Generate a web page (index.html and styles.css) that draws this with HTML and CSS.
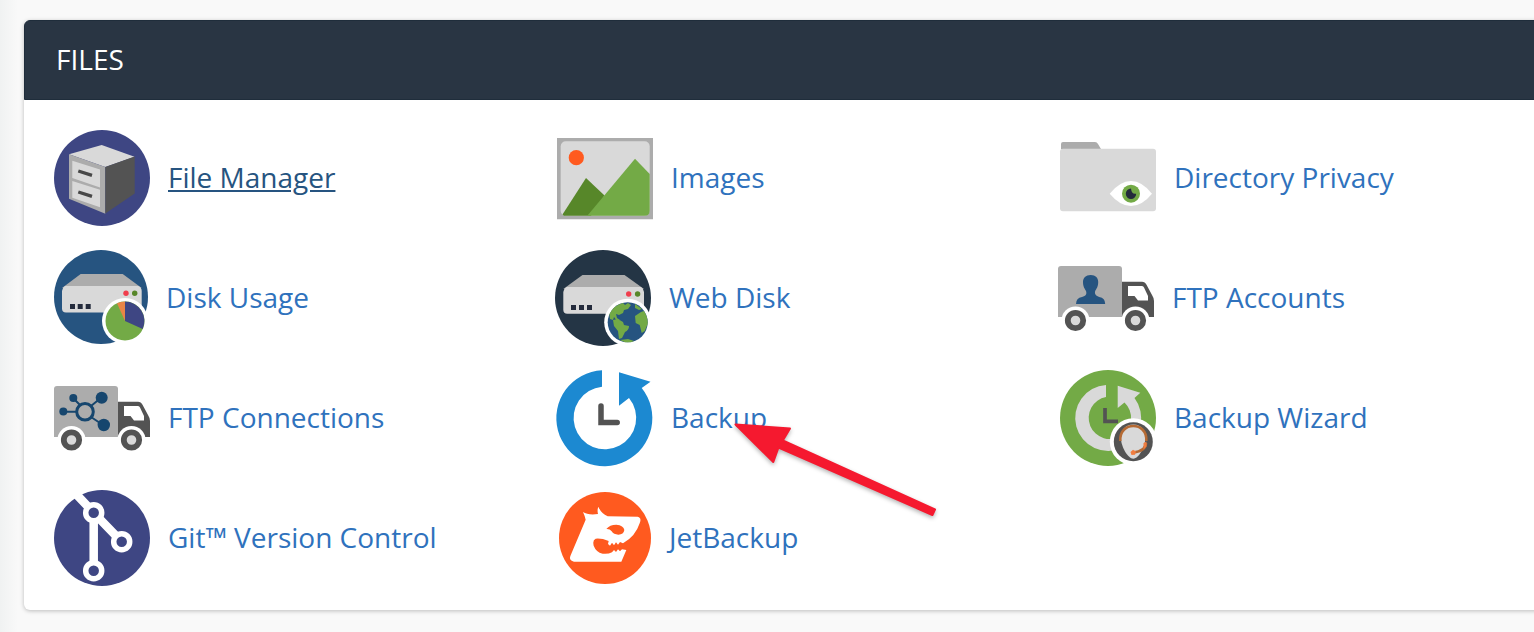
FILE: index.html
```html
<!DOCTYPE html>
<html lang="en">
<head>
<meta charset="utf-8">
<title>Files</title>
<link rel="stylesheet" href="styles.css">
</head>
<body>
<main class="page">
<section class="panel" aria-labelledby="files-title">
<h2 class="panel-title" id="files-title">FILES</h2>
<ul class="tools">
<li class="tool"><a class="tool-link is-active" href="#file-manager">
<svg class="icon" viewBox="0 0 96 96" aria-hidden="true"><circle cx="48" cy="48" r="48" fill="#3e4683"/><path fill="#d9d9d9" d="M15 24.3L47.7 15 80.5 26.7 51.3 37z"/><path fill="#acacac" d="M15 24.3L51.3 37v46.7L15 68.7z"/><path fill="#535353" d="M51.3 37l29.4-10.5v37L51.3 83.5z"/><path fill="#d9d9d9" d="M18.3 30.7L46 39.5v18L18.3 48zM18.3 51L46 59.7v17.6L18.3 67.7z"/><path stroke="#484848" stroke-width="3.4" d="M24.3 41L38 45.3M24.3 62L38 66.3"/></svg>
<span class="label">File Manager</span></a></li>
<li class="tool"><a class="tool-link" href="#images">
<svg class="icon" viewBox="0 0 96 96" aria-hidden="true"><path fill="#acacac" d="M0 8h96v81.3H0z"/><rect x="3.7" y="11.3" width="89" height="74.4" rx="5" fill="#d9d9d9"/><circle cx="19.3" cy="27.7" r="7.6" fill="#ff5a1f"/><path fill="#578729" d="M5.5 84.5L29 48l18.5 17.5L34 85.7H7z"/><path fill="#73aa46" d="M30.3 85.7L78 28.7 92.7 44v36.7q0 5-5 5z"/></svg>
<span class="label">Images</span></a></li>
<li class="tool"><a class="tool-link" href="#directory-privacy">
<svg class="icon" viewBox="0 0 96 96" aria-hidden="true"><path fill="#acacac" d="M1 19v-5q0-2 2-2h32q2 0 3 2l3 5z"/><rect y="18.7" width="96" height="62.6" rx="3" fill="#d9d9d9"/><path fill="#fff" d="M49.7 63.7Q60 51 71 51t21 12.7Q82 76 71 76T49.7 63.7z"/><circle cx="71" cy="63.7" r="9" fill="#73aa46"/><path fill="#242b3c" d="M71 58.5a5.2 5.2 0 1 0 5.2 5.2q-4.6 1-5.2-5.2z"/></svg>
<span class="label">Directory Privacy</span></a></li>

<li class="tool"><a class="tool-link" href="#disk-usage">
<svg class="icon icon-narrow" viewBox="0 0 94 96" aria-hidden="true"><circle cx="47" cy="47" r="47" fill="#265480"/><path fill="#acacac" d="M26.7 24h42l19 14H8z"/><path fill="#d9d9d9" d="M11 36h73.5q3.2 1.500 3.200 5v17.500q0 4-4 4H12q-4 0-4-4V41q0-3 3-5z"/><path fill="#242b3c" d="M16 54h5v5h-5zM23.700 54h5v5h-5zM31.700 54h5v5h-5z"/><circle cx="72" cy="43.200" r="2.700" fill="#f03e4d"/><circle cx="80.700" cy="43.200" r="2.700" fill="#578729"/><circle cx="71" cy="71" r="23" fill="#fff"/><circle cx="71" cy="71" r="19.500" fill="#73aa46"/><path fill="#3e4683" d="M71 71V51.500A19.500 19.500 0 0 1 88.700 79z"/><path fill="#e98547" d="M71 71V51.500a19.500 19.500 0 0 0-8 1.700z"/></svg>
<span class="label">Disk Usage</span></a></li>
<li class="tool"><a class="tool-link" href="#web-disk">
<svg class="icon icon-narrow" viewBox="2 0 94 96" aria-hidden="true"><circle cx="48" cy="48" r="48" fill="#243545"/><path fill="#acacac" d="M27.500 25h42L89 39H8.300z"/><path fill="#d9d9d9" d="M11.500 37H86q3 2 3 5v17.700q0 4-4 4H12.300q-4 0-4-4V42q0-3 3.200-5z"/><path fill="#242b3c" d="M16 55h5v5h-5zM24 55h5v5h-5zM32 55h5v5h-5z"/><circle cx="73.700" cy="44" r="2.700" fill="#f03e4d"/><circle cx="82.600" cy="44" r="2.700" fill="#578729"/><circle cx="72.700" cy="72.300" r="23.500" fill="#fff"/><circle cx="72.700" cy="72.300" r="20" fill="#265480"/><path fill="#73aa46" d="M54.500 64Q59 55 68 53l2 2 3-2 3 2-3 4-4 1-1 3-4 2-3-1 1 4 3 2-3 1-3-4-1 3-3-1zM58 70l5-1 5 3 1 3 5 1q0 4-4 6l-3 6-3 1-1-8-4-5zM80 54l7 5-3 1-4-2zM80 66l6-4 3-1q4 6 3.700 13l-3 7-3 2-2-8-4-2zM65 90l8-1 6 2-3 1.300h-6z"/></svg>
<span class="label">Web Disk</span></a></li>
<li class="tool"><a class="tool-link" href="#ftp-accounts">
<svg class="icon icon-narrow" viewBox="2 0 94 96" aria-hidden="true"><path fill="#acacac" d="M3 16h58q3 0 3 3v48H0V19q0-3 3-3z"/><path fill="#535353" d="M64 31.700h20q3 0 4.500 3L94 45q2 3 2 6v16H64z"/><path fill="#fff" d="M70 36h14q1.500 0 2 1.500L90 46v4.500H80L76.500 46H70z"/><g fill="#fff"><circle cx="17.500" cy="70.500" r="14"/><circle cx="77.500" cy="70.500" r="14"/></g><g fill="#d9d9d9" stroke="#535353" stroke-width="5.800"><circle cx="17.500" cy="70.500" r="7.700"/><circle cx="77.500" cy="70.500" r="7.700"/></g><path fill="#265480" d="M32.700 25c5 0 7.500 3 7.500 7 0 5-2 7-3 9-1 3 1 5 4 6q6 1 6 7H18q0-6 6-7c4-1 5-3 4-6-1-2-3-4-3-9 0-4 2.700-7 7.700-7z"/></svg>
<span class="label">FTP Accounts</span></a></li>

<li class="tool"><a class="tool-link" href="#ftp-connections">
<svg class="icon" viewBox="0 0 96 96" aria-hidden="true"><path fill="#acacac" d="M3 16h58q3 0 3 3v48H0V19q0-3 3-3z"/><path fill="#535353" d="M64 31.700h20q3 0 4.500 3L94 45q2 3 2 6v16H64z"/><path fill="#fff" d="M70 36h14q1.500 0 2 1.500L90 46v4.500H80L76.500 46H70z"/><g fill="#fff"><circle cx="17.500" cy="70" r="14"/><circle cx="77.500" cy="70" r="14"/></g><g fill="#d9d9d9" stroke="#535353" stroke-width="5.800"><circle cx="17.500" cy="70" r="7.700"/><circle cx="77.500" cy="70" r="7.700"/></g><path stroke="#16466e" stroke-width="2" d="M9 41.700h14M37 36l11-9M19 28l7 7M37 47l12 8"/><circle cx="31" cy="41.700" r="8.300" fill="none" stroke="#16466e" stroke-width="3"/><g fill="#16466e"><circle cx="19.300" cy="28" r="4"/><circle cx="47.700" cy="27.800" r="6"/><circle cx="9.300" cy="41.500" r="4"/><circle cx="49.800" cy="55" r="6.200"/></g></svg>
<span class="label">FTP Connections</span></a></li>
<li class="tool"><a class="tool-link" href="#backup">
<svg class="icon" viewBox="0 0 96 96" aria-hidden="true"><path fill="#1c89d1" d="M45 .2A48 48 0 1 0 84.700 18l8.800-6.300L62 2.300v33.400L72 28a31.300 31.300 0 1 1-27-11.200z"/><path fill="none" stroke="#535353" stroke-width="5.500" stroke-linecap="round" d="M44 36v16.600h16.200"/></svg>
<span class="label">Backup</span></a>
<svg class="pointer" viewBox="0 0 204 98" aria-hidden="true"><path fill="#f5192f" stroke="#f5192f" stroke-width="2" stroke-linejoin="round" d="M3.500 2.500L58 6.500l-7.200 12L203 87.500l-2.600 5.500L46.500 25.500 41.300 40z"/></svg></li>
<li class="tool"><a class="tool-link" href="#backup-wizard">
<svg class="icon" viewBox="0 0 96 96" aria-hidden="true"><circle cx="48" cy="48" r="48" fill="#73aa46"/><path fill="#d9d9d9" d="M46 15A33 33 0 1 0 74.500 28l5.800-5.300-22.600-7V38l6.800-5.500A21.200 21.200 0 1 1 46 27z"/><path fill="none" stroke="#535353" stroke-width="3.700" d="M45 38v13.300h13"/><circle cx="73.300" cy="71.700" r="23.500" fill="#fff"/><circle cx="73.300" cy="71.700" r="19.500" fill="#535353"/><path fill="#d9d9d9" d="M73.300 54.500c9 0 12 7 12 14S79 88.700 73.300 88.700 61 76 61 68.500s3.300-14 12.300-14z"/><path fill="none" stroke="#b56a34" stroke-width="2.600" d="M60.300 71c-1.500-20 27.500-20 26 0M86 73q0 8-13 9.500"/><path fill="#f07d40" d="M83.500 73l3-1.500v5l-3 3zM70.500 82l2.500-2.300 3 1.700-1 3.300-3.500.3z"/></svg>
<span class="label">Backup Wizard</span></a></li>

<li class="tool"><a class="tool-link" href="#git">
<svg class="icon" viewBox="0 0 96 96" aria-hidden="true"><circle cx="48" cy="48" r="48" fill="#3e4683"/><path fill="none" stroke="#fff" stroke-width="8.500" d="M23 5l16.700 17.700v58M39.700 22.700l28 29"/><g fill="#3e4683" stroke="#fff" stroke-width="5.500"><circle cx="39.700" cy="22.700" r="8"/><circle cx="67.700" cy="51.700" r="8"/><circle cx="39.700" cy="80.700" r="8"/></g></svg>
<span class="label">Git™ Version Control</span></a></li>
<li class="tool"><a class="tool-link" href="#jetbackup">
<svg class="icon icon-narrow" viewBox="39 30 282 288" aria-hidden="true"><circle cx="183" cy="174" r="138" fill="#ff5a1f"/><path fill="#fff" d="M117 96q15 10 45 6-3-12 1-22 8 20 28 29l90 1q13 3 6 20Q274 170 237 190l-9-4-6 8-6-7-6 9-6-8-6 9-6-5 2-9q-22-9-39-7-10 4-6 21 7 19 27 24 16 2 28-4l6-7 6 6 6-8 6 6 6-6 13 2-15 35H90q-17-3-10-19l45-107q-2-10-8-23z"/><path fill="#ff5a1f" d="M187 147q10-13 30-13 22 2 24 16-2 14-18 14-14 0-20-10-6-8-16-7z"/></svg>
<span class="label">JetBackup</span></a></li>
</ul>
</section>
</main>
</body>
</html>
```
FILE: styles.css
```css
* {
  box-sizing: border-box;
}

body {
  margin: 0;
  min-height: 100vh;
  overflow-x: hidden;
  background: linear-gradient(90deg, #f0f2f2, #f9f9f9 18px);
  font-family: "Open Sans", "Noto Sans", sans-serif;
  font-size: 28px;
  line-height: 40px;
}

.page {
  padding: 20px 0 20px 24px;
  overflow: hidden;
}

/* The panel runs on past the right edge of the window. */
.panel {
  margin-right: -29px;
  background: #fff;
  border-radius: 6px;
  box-shadow: 0 1px 4px rgba(0, 0, 0, 0.25);
}

.panel-title {
  margin: 0;
  padding: 18px 31px 20px;
  border: 1px solid #1f2d3b;
  border-radius: 6px 6px 0 0;
  background: #293543;
  color: #fff;
  font-size: 28px;
  font-weight: 400;
}

.tools {
  display: grid;
  grid-template-columns: repeat(3, 1fr);
  gap: 24px 0;
  margin: 0;
  padding: 30px 0 24px 30px;
  list-style: none;
}

.tool {
  position: relative;
}

.tool-link {
  display: flex;
  align-items: center;
  gap: 18px;
  width: fit-content;
  color: #2f72bd;
  text-decoration: none;
}

.label {
  padding-bottom: 2px;
}

.tool-link:hover,
.is-active {
  color: #265480;
}

.tool-link:hover .label,
.is-active .label {
  text-decoration: underline;
}

.icon {
  display: block;
  flex: none;
  width: 96px;
  height: 96px;
  overflow: visible;
}

.icon-narrow {
  width: 94px;
}

.pointer {
  position: absolute;
  z-index: 1;
  top: 52px;
  left: 175px;
  width: 204px;
  height: 98px;
  overflow: visible;
  filter: drop-shadow(0 2px 2px rgba(0, 0, 0, 0.3));
  pointer-events: none;
}
```
